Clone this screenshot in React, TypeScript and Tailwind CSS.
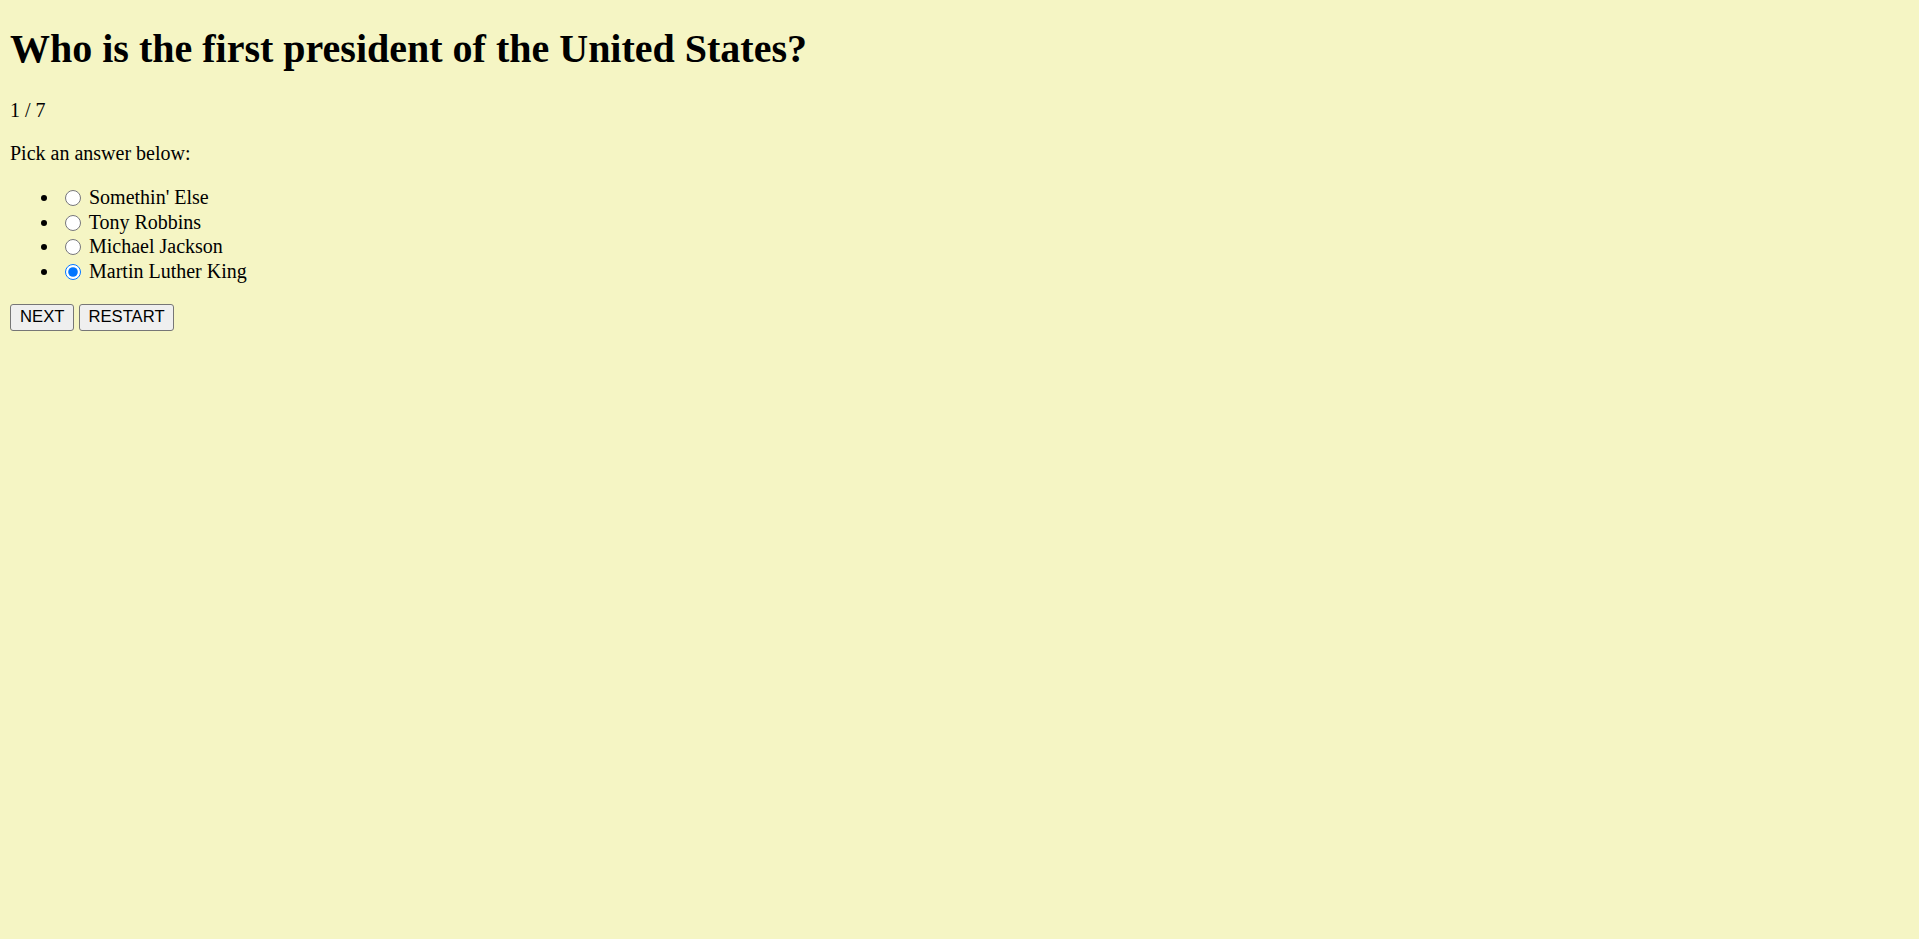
import React from 'react';

const answers = ["Somethin' Else", 'Tony Robbins', 'Michael Jackson', 'Martin Luther King'];

export default function App() {
  return (
    <div className="min-h-screen bg-[#f5f5c4] font-['Liberation_Serif','Times_New_Roman',serif] text-[20px] text-black px-[10px] pt-[26px] pb-[10px]">
      <h1 className="text-[40px] font-bold leading-[46px] mb-[27px]">
        Who is the first president of the United States?
      </h1>

      <p className="leading-[23px] mb-[20px]">1 / 7</p>
      <p className="leading-[23px] mb-[20px]">Pick an answer below:</p>

      <ul className="list-disc pl-[50px] mb-[20px]">
        {answers.map((a, i) => (
          <li key={a} className="h-[24.7px] leading-[24.7px]">
            <input
              type="radio"
              name="answer"
              defaultChecked={i === 3}
              className="w-[16px] h-[16px] ml-[5px] mr-[3px] align-[-2px] accent-[#0075ff]"
            />{' '}
            {a}
          </li>
        ))}
      </ul>

      <div className="flex gap-[5px]">
        <button className="h-[27px] px-[9px] bg-[#efefef] border border-[#767676] rounded-[3px] font-['Liberation_Sans',Arial,sans-serif] text-[16.67px] leading-none">
          NEXT
        </button>
        <button className="h-[27px] px-[8px] bg-[#efefef] border border-[#767676] rounded-[3px] font-['Liberation_Sans',Arial,sans-serif] text-[16.67px] leading-none">
          RESTART
        </button>
      </div>
    </div>
  );
}
